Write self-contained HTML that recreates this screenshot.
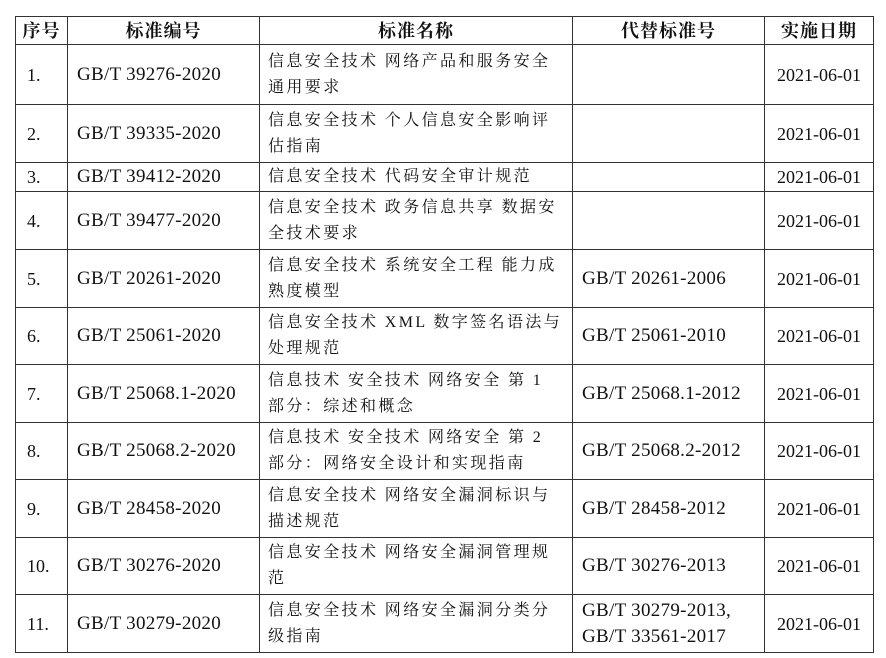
<!DOCTYPE html>
<html><head><meta charset="utf-8"><style>
html,body{margin:0;padding:0;background:#fff;width:886px;height:658px;overflow:hidden}
table{position:absolute;left:15px;top:16px;border-collapse:collapse;table-layout:fixed;font-family:"Liberation Serif","Noto Serif CJK SC",serif;color:#111}
td,th{border:1.3px solid #333;padding:0;font-size:18px;line-height:26px;text-align:center;vertical-align:middle;white-space:nowrap}
th{font-weight:bold;font-size:18px;letter-spacing:1px}
td.i{text-align:left;padding-left:11px}
td.g{text-align:left;padding-left:9px;font-size:19px;letter-spacing:0.3px}
td.n{text-align:left;padding-left:8px;font-size:16px;letter-spacing:2.4px}
</style></head><body>
<table>
<colgroup><col style="width:52px"><col style="width:192px"><col style="width:313px"><col style="width:192px"><col style="width:109px"></colgroup>
<tr style="height:28px"><th>序号</th><th>标准编号</th><th>标准名称</th><th>代替标准号</th><th>实施日期</th></tr>
<tr style="height:60px"><td class="i">1.</td><td class="g">GB/T 39276-2020</td><td class="n">信息安全技术 网络产品和服务安全<br>通用要求</td><td></td><td>2021-06-01</td></tr>
<tr style="height:58px"><td class="i">2.</td><td class="g">GB/T 39335-2020</td><td class="n">信息安全技术 个人信息安全影响评<br>估指南</td><td></td><td>2021-06-01</td></tr>
<tr style="height:29px"><td class="i">3.</td><td class="g">GB/T 39412-2020</td><td class="n">信息安全技术 代码安全审计规范</td><td></td><td>2021-06-01</td></tr>
<tr style="height:58px"><td class="i">4.</td><td class="g">GB/T 39477-2020</td><td class="n">信息安全技术 政务信息共享 数据安<br>全技术要求</td><td></td><td>2021-06-01</td></tr>
<tr style="height:58px"><td class="i">5.</td><td class="g">GB/T 20261-2020</td><td class="n">信息安全技术 系统安全工程 能力成<br>熟度模型</td><td class="g">GB/T 20261-2006</td><td>2021-06-01</td></tr>
<tr style="height:57px"><td class="i">6.</td><td class="g">GB/T 25061-2020</td><td class="n">信息安全技术 XML 数字签名语法与<br>处理规范</td><td class="g">GB/T 25061-2010</td><td>2021-06-01</td></tr>
<tr style="height:58px"><td class="i">7.</td><td class="g">GB/T 25068.1-2020</td><td class="n">信息技术 安全技术 网络安全 第 1<br>部分：综述和概念</td><td class="g">GB/T 25068.1-2012</td><td>2021-06-01</td></tr>
<tr style="height:57px"><td class="i">8.</td><td class="g">GB/T 25068.2-2020</td><td class="n">信息技术 安全技术 网络安全 第 2<br>部分：网络安全设计和实现指南</td><td class="g">GB/T 25068.2-2012</td><td>2021-06-01</td></tr>
<tr style="height:58px"><td class="i">9.</td><td class="g">GB/T 28458-2020</td><td class="n">信息安全技术 网络安全漏洞标识与<br>描述规范</td><td class="g">GB/T 28458-2012</td><td>2021-06-01</td></tr>
<tr style="height:57px"><td class="i">10.</td><td class="g">GB/T 30276-2020</td><td class="n">信息安全技术 网络安全漏洞管理规<br>范</td><td class="g">GB/T 30276-2013</td><td>2021-06-01</td></tr>
<tr style="height:58px"><td class="i">11.</td><td class="g">GB/T 30279-2020</td><td class="n">信息安全技术 网络安全漏洞分类分<br>级指南</td><td class="g">GB/T 30279-2013,<br>GB/T 33561-2017</td><td>2021-06-01</td></tr>
</table>
</body></html>
